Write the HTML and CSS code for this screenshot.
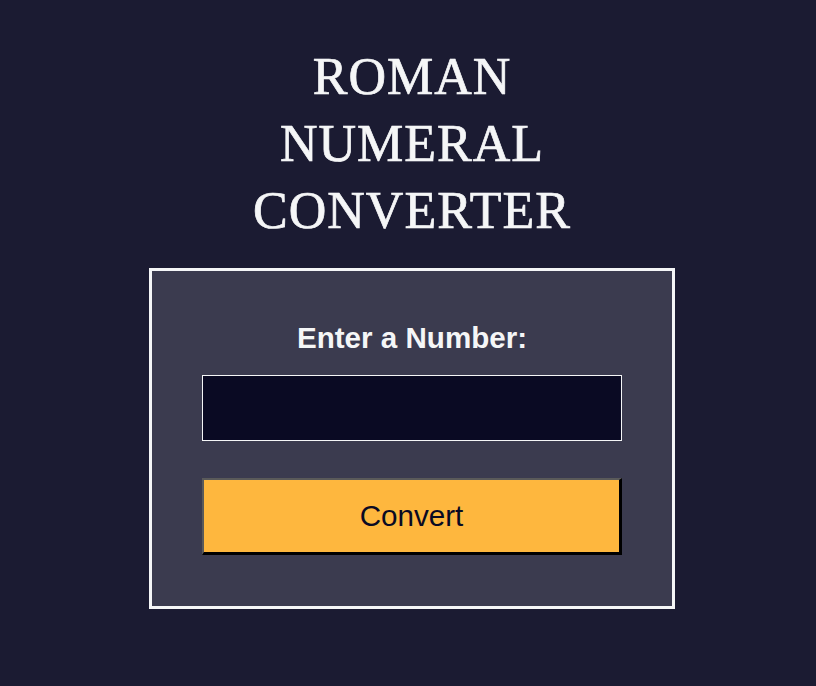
FILE: index.html
```html
<!DOCTYPE html>
<html lang="en">
<head>
<meta charset="utf-8">
<title>Roman Numeral Converter</title>
<link rel="stylesheet" href="styles.css">
</head>
<body>
<main class="page">
  <h1 class="title">ROMAN<br>NUMERAL<br>CONVERTER</h1>
  <form class="card">
    <label class="label" for="number">Enter a Number:</label>
    <input class="input" type="number" id="number">
    <button class="btn" type="button">Convert</button>
  </form>
</main>
</body>
</html>
```
FILE: styles.css
```css
* { box-sizing: border-box; }
html, body { margin: 0; padding: 0; }
body {
  background: #1b1b32;
  color: #f5f6f7;
  font-family: "Liberation Sans", Arial, sans-serif;
  height: 686px;
}
.page {
  display: flex;
  flex-direction: column;
  align-items: center;
  padding-top: 43px;
  padding-left: 8px;
}
.title {
  margin: 0;
  font-family: "Liberation Serif", "Times New Roman", serif;
  font-weight: 400;
  font-size: 52px;
  line-height: 67px;
  letter-spacing: 1px;
  text-align: center;
  color: #f5f6f7;
  -webkit-text-stroke: 0.7px #f5f6f7;
}
.card {
  margin-top: 24px;
  width: 526px;
  height: 341px;
  border: 3px solid #f5f6f7;
  background: #3b3b4f;
  display: flex;
  flex-direction: column;
  align-items: center;
  padding-top: 50px;
}
.label {
  font-weight: 700;
  font-size: 29.6px;
  line-height: 33px;
  color: #f5f6f7;
}
.input {
  margin-top: 21px;
  width: 420px;
  height: 66px;
  background: #0a0a23;
  border: 1px solid #f5f6f7;
  color: #f5f6f7;
  font-size: 26px;
  padding: 0 10px;
  outline: none;
}
.btn {
  margin-top: 37px;
  width: 420px;
  height: 77px;
  background: #feb73e;
  border-style: solid;
  border-width: 2px 3px 3px 2px;
  border-color: #5a5a5a #000 #000 #5a5a5a;
  font-family: "Liberation Sans", Arial, sans-serif;
  font-size: 29.6px;
  color: #0a0a23;
  padding: 0;
  cursor: pointer;
}
```
